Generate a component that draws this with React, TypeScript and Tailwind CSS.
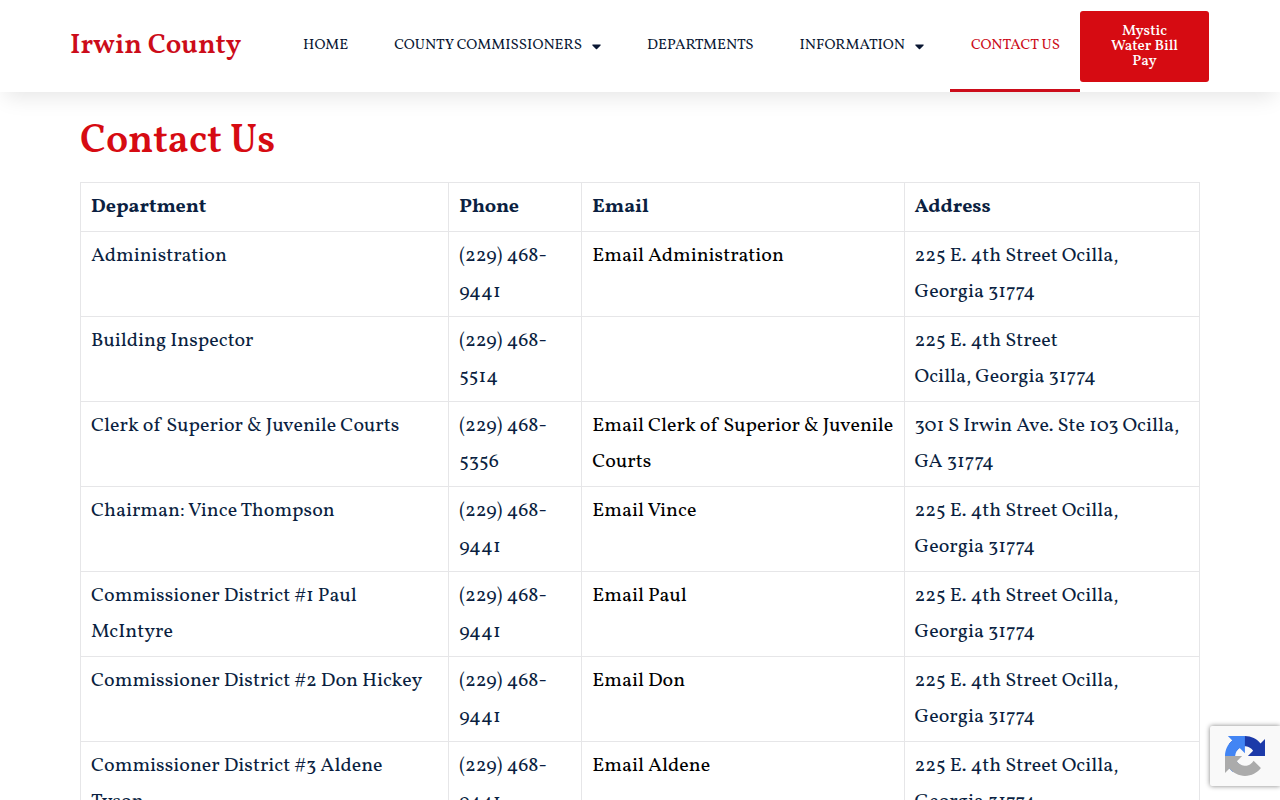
interface NavItem {
    label: string;
    hasMenu?: boolean;
    active?: boolean;
}

interface Contact {
    department: string;
    phone: string;
    email?: string;
    address: string;
}

const navItems: NavItem[] = [
    { label: "HOME" },
    { label: "COUNTY COMMISSIONERS", hasMenu: true },
    { label: "DEPARTMENTS" },
    { label: "INFORMATION", hasMenu: true },
    { label: "CONTACT US", active: true },
];

const OFFICE = "225 E. 4th Street Ocilla, Georgia 31774";

const contacts: Contact[] = [
    { department: "Administration", phone: "(229) 468-9441", email: "Email Administration", address: OFFICE },
    { department: "Building Inspector", phone: "(229) 468-5514", address: "225 E. 4th Street\nOcilla, Georgia 31774" },
    {
        department: "Clerk of Superior & Juvenile Courts",
        phone: "(229) 468-5356",
        email: "Email Clerk of Superior & Juvenile Courts",
        address: "301 S Irwin Ave. Ste 103 Ocilla, GA 31774",
    },
    { department: "Chairman: Vince Thompson", phone: "(229) 468-9441", email: "Email Vince", address: OFFICE },
    { department: "Commissioner District #1 Paul McIntyre", phone: "(229) 468-9441", email: "Email Paul", address: OFFICE },
    { department: "Commissioner District #2 Don Hickey", phone: "(229) 468-9441", email: "Email Don", address: OFFICE },
    { department: "Commissioner District #3 Aldene Tyson", phone: "(229) 468-9441", email: "Email Aldene", address: OFFICE },
];

function Caret() {
    return (
        <svg viewBox="0 0 10 6" className="mt-[2px] h-[6px] w-[9px] fill-current" aria-hidden="true">
            <path d="M1 0.3h8c.6 0 .9.7.5 1.1L5.6 5.3c-.3.3-.9.3-1.2 0L.5 1.4C.1 1 .4.3 1 .3z" />
        </svg>
    );
}

function Header() {
    return (
        <header className="relative bg-white shadow-[0_10px_20px_-5px_rgba(0,0,0,0.1)]">
            <div className="mx-auto flex h-[92px] max-w-[1140px] items-stretch justify-between pr-px">
                <a href="#" className="flex items-center text-[28px] font-semibold whitespace-nowrap text-[#cc0c1a]">
                    Irwin County
                </a>

                <div className="flex items-stretch">
                    <nav className="flex items-stretch gap-[6px]">
                        {navItems.map((item) => (
                            <a
                                key={item.label}
                                href="#"
                                aria-current={item.active ? "page" : undefined}
                                className={
                                    item.active
                                        ? "flex items-center border-y-3 border-t-transparent border-b-[#cc0c1a] pr-5 pl-[21px] text-[15px] whitespace-nowrap text-[#cc0c1a]"
                                        : "flex items-center gap-[10px] border-y-3 border-transparent px-5 text-[15px] whitespace-nowrap text-[#0a1733]"
                                }
                            >
                                {item.label}
                                {item.hasMenu && <Caret />}
                            </a>
                        ))}
                    </nav>

                    <a
                        href="#"
                        className="mt-[11px] flex h-[71px] w-[129px] items-center rounded-[3px] bg-[#d60b12] px-6 text-center text-[15px] leading-[15px] font-medium text-white"
                    >
                        Mystic Water Bill Pay
                    </a>
                </div>
            </div>
        </header>
    );
}

function ContactTable() {
    return (
        <table className="w-full table-fixed border-collapse text-left text-[20px] leading-9 text-[#0b1f41]">
            <colgroup>
                <col className="w-[32.9%]" />
                <col className="w-[11.9%]" />
                <col className="w-[28.8%]" />
                <col />
            </colgroup>
            <thead>
                <tr>
                    {["Department", "Phone", "Email", "Address"].map((heading) => (
                        <th key={heading} scope="col" className="border border-[#e6e6e8] px-[10px] py-[6px] font-bold">
                            {heading}
                        </th>
                    ))}
                </tr>
            </thead>
            <tbody>
                {contacts.map((contact) => (
                    <tr key={contact.department} className="align-top">
                        <td className="border border-[#e6e6e8] py-[6px] pr-4 pl-[10px]">{contact.department}</td>
                        <td className="border border-[#e6e6e8] px-[10px] py-[6px]">{contact.phone}</td>
                        <td className="border border-[#e6e6e8] py-[6px] pr-1 pl-[10px]">
                            {contact.email && (
                                <a href="#" className="text-black">
                                    {contact.email}
                                </a>
                            )}
                        </td>
                        <td className="border border-[#e6e6e8] px-[10px] py-[6px] whitespace-pre-line">{contact.address}</td>
                    </tr>
                ))}
            </tbody>
        </table>
    );
}

function RecaptchaBadge() {
    return (
        <div className="fixed right-0 bottom-[14px] flex h-[60px] w-[70px] items-center rounded-l-[2px] bg-[#f9f9f9] pl-[15px] shadow-[0_0_5px_gray]">
            <svg viewBox="0 0 64 64" className="h-10 w-10" role="img" aria-label="reCAPTCHA">
                <path
                    fill="#1c3aa9"
                    d="M64 31.955l-.013-1.37V4.687l-7.16 7.16C50.967 4.674 42.033.093 32.029.093c-10.4 0-19.652 4.96-25.488 12.638l11.736 11.859a15.55 15.55 0 0 1 4.754-5.334c2.05-1.6 4.952-2.906 8.968-2.906.485 0 .86.057 1.135.163 4.976.393 9.288 3.14 11.828 7.124l-8.307 8.307L64 31.953"
                />
                <path
                    fill="#4285f4"
                    d="M31.862.094l-1.37.013H4.594l7.16 7.16C4.58 13.127 0 22.06 0 32.065c0 10.4 4.96 19.652 12.638 25.488l11.86-11.736a15.55 15.55 0 0 1-5.335-4.754c-1.6-2.05-2.906-4.952-2.906-8.968 0-.485.057-.86.163-1.135.393-4.976 3.14-9.288 7.124-11.828l8.307 8.307L31.86.095"
                />
                <path
                    fill="#ababab"
                    d="M.001 32.045l.013 1.37v25.898l7.16-7.16c5.86 7.173 14.793 11.754 24.798 11.754 10.4 0 19.652-4.96 25.488-12.638L45.724 39.41a15.55 15.55 0 0 1-4.754 5.334c-2.05 1.6-4.952 2.906-8.968 2.906-.485 0-.86-.057-1.135-.163-4.976-.393-9.288-3.14-11.828-7.124l8.307-8.307L0 32.045"
                />
            </svg>
        </div>
    );
}

export default function App() {
    return (
        <div className="bg-white font-['Vollkorn','Liberation_Serif',serif]">
            <Header />

            <main className="mx-auto max-w-[1140px] px-[10px] pt-[30px] pb-10">
                <h1 className="mb-5 text-[40px] leading-10 font-semibold text-[#d60b12]">Contact Us</h1>

                <ContactTable />
            </main>

            <RecaptchaBadge />
        </div>
    );
}
